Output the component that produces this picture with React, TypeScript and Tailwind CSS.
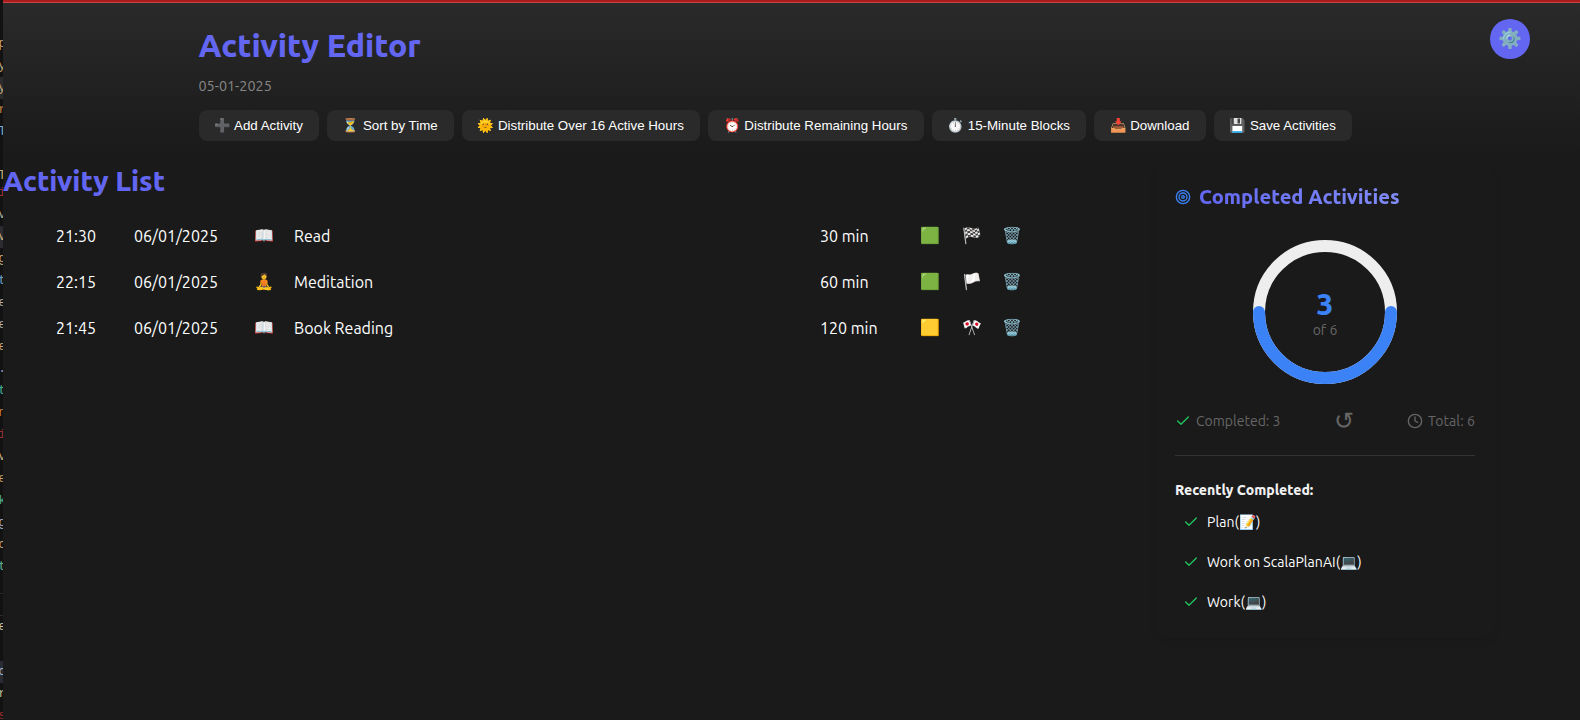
import React from "react";

const actions = [
  { icon: "➕", label: "Add Activity", w: "w-[120px]" },
  { icon: "⏳", label: "Sort by Time", w: "w-[127px]" },
  { icon: "🌞", label: "Distribute Over 16 Active Hours", w: "w-[238px]" },
  { icon: "⏰", label: "Distribute Remaining Hours", w: "w-[216px]" },
  { icon: "⏱️", label: "15-Minute Blocks", w: "w-[154px]" },
  { icon: "📥", label: "Download", w: "w-[112px]" },
  { icon: "💾", label: "Save Activities", w: "w-[138px]" },
];

const activities = [
  { time: "21:30", date: "06/01/2025", icon: "📖", name: "Read", duration: "30 min", level: "🟩", flag: "🏁" },
  { time: "22:15", date: "06/01/2025", icon: "🧘", name: "Meditation", duration: "60 min", level: "🟩", flag: "🏳️" },
  { time: "21:45", date: "06/01/2025", icon: "📖", name: "Book Reading", duration: "120 min", level: "🟨", flag: "🎌" },
];

const completed = ["Plan(📝)", "Work on ScalaPlanAI(💻)", "Work(💻)"];

// Slice of the editor window that shows behind the app's left edge.
const edge = [
  ["", "h-[22px]"], ["p", "h-[22px] text-[#c8a878]"], ["y", "h-[22px] text-[#c8a878]"], ["y", "h-[22px] text-[#c8a878] bg-[#2a2c30]"],
  ["r", "h-[22px] text-[#c08040]"], ["l", "h-[22px] text-[#7ab0d8]"], ["", "h-[22px]"], ["T", "h-[17px] text-[#c8a878]"],
  ["i", "h-[22px] text-[#a03030]"], ["v", "h-[22px] text-[#b0a890]"], ["v", "h-[22px] text-[#c8a878] bg-[#2a2c30]"], ["g", "h-[22px] text-[#c8a878]"],
  ["t", "h-[22px] text-[#6aa0c0]"], ["e", "h-[22px] text-[#b0b0a8]"], ["e", "h-[22px] text-[#b0b0a8]"], ["e", "h-[22px] text-[#c8a878]"],
  [".", "h-[22px] text-[#a0a0c0]"], ["t", "h-[22px] text-[#40b090]"], ["n", "h-[22px] text-[#d08840]"], ["i", "h-[22px] text-[#a03030]"],
  ["v", "h-[22px] text-[#c8a878]"], ["e", "h-[22px] text-[#c8a060]"], ["k", "h-[22px] text-[#50b090]"], ["g", "h-[22px] text-[#b0b0c0]"],
  ["c", "h-[22px] text-[#c8a878]"], ["t", "h-[22px] text-[#60b090]"], ["", "h-[16px] border-b border-[#2a2a2a]"], ["", "h-[22px] border-b border-[#2a2a2a]"],
  ["e", "h-[23px] text-[#c8c8b0]"], ["", "h-[22px]"], ["c", "h-[22px] text-[#a0b8d0] bg-[#2a2c34]"], ["r", "h-[22px] text-[#b8b890]"], ["s", "h-[22px] text-[#a03030]"],
];

function Check({ className }: { className: string }) {
  return (
    <svg viewBox="0 0 24 24" className={className} fill="none" stroke="#22c55e" strokeWidth="2" strokeLinecap="round" strokeLinejoin="round">
      <path d="M20 6 9 17l-5-5" />
    </svg>
  );
}

function Header() {
  return (
    <header className="relative flex h-[152px] flex-col bg-linear-to-b from-[#2a2a2a] to-[#1a1a1a] pl-[195.5px]">
      <h1 className="mt-[21px] h-[42px] text-[32px] leading-[42px] font-extrabold text-[#6366f1]">Activity Editor</h1>
      <p className="mt-[9px] h-[22px] text-[14.4px] leading-[22px] font-[430] text-[#888888]">05-01-2025</p>
      <div className="mt-[13px] flex gap-2 font-['Liberation_Sans',Arial,sans-serif] text-[13.333px] leading-[15px]">
        {actions.map((a) => (
          <button key={a.label} className={`${a.w} h-[31px] shrink-0 overflow-hidden rounded-lg bg-[#2a2a2a] text-center whitespace-nowrap text-white`}>
            {a.icon} {a.label}
          </button>
        ))}
      </div>
      <button className="absolute top-4 right-[50px] flex size-10 items-center justify-center rounded-full bg-[#6366f1] text-[19.2px] leading-none">
        ⚙️
      </button>
    </header>
  );
}

function ActivityList() {
  return (
    <section className="w-[1152px] pt-[7px]">
      <h2 className="h-[38px] text-[28px] leading-[38px] font-extrabold text-[#6366f1]">Activity List</h2>
      <ul className="mt-[13px]">
        {activities.map((a) => (
          <li key={a.time} className="flex h-[46px] items-center pl-[53px] text-base font-[430] text-white">
            <span className="w-[78px]">{a.time}</span>
            <span className="w-[120px]">{a.date}</span>
            <span className="w-[40px] pb-[2px]">{a.icon}</span>
            <span className="w-[526px]">{a.name}</span>
            <span className="w-[100px]">{a.duration}</span>
            <span className="w-[42px] pb-[2px]">{a.level}</span>
            <span className="w-[40px] pb-[2px]">{a.flag}</span>
            <span className="pb-[2px]">🗑️</span>
          </li>
        ))}
      </ul>
    </section>
  );
}

function CompletedCard() {
  return (
    <aside className="mt-2 h-[475px] w-[340px] rounded-xl bg-[#1a1a1a] px-5 pt-[20px] shadow-[0_4px_6px_rgba(0,0,0,0.05)]">
      <div className="flex h-[28px] items-center gap-2">
        <svg viewBox="0 0 24 24" className="size-4" fill="none" stroke="#3b82f6" strokeWidth="2">
          <circle cx="12" cy="12" r="10" />
          <circle cx="12" cy="12" r="6" />
          <circle cx="12" cy="12" r="2" />
        </svg>
        <h3 className="bg-linear-to-r from-[#6366f1] to-[#818cf8] bg-clip-text text-[20px] leading-[28px] font-extrabold whitespace-nowrap text-transparent">Completed Activities</h3>
      </div>
      <div className="mt-[26px] flex justify-center">
        <div className="grid size-[150px] place-items-center">
          <svg viewBox="0 0 150 150" className="col-start-1 row-start-1 size-[150px]" fill="none" strokeWidth="12">
            <circle cx="75" cy="75" r="66" stroke="#eeeeee" />
            <path d="M9 75a66 66 0 0 0 132 0" stroke="#3b82f6" strokeLinecap="round" />
          </svg>
          <div className="col-start-1 row-start-1 flex flex-col items-center pt-[3px]">
            <span className="text-[30px] leading-[33px] font-extrabold text-[#3b82f6]">3</span>
            <span className="text-[14px] leading-[19px] text-[#666666]">of 6</span>
          </div>
        </div>
      </div>
      <div className="mt-[22px] flex h-[24px] items-center justify-between text-[14px] text-[#666666]">
        <span className="flex items-center gap-[5px]">
          <Check className="size-4" />
          Completed: 3
        </span>
        <span className="text-[24px] leading-none">↺</span>
        <span className="flex items-center gap-[5px]">
          <svg viewBox="0 0 24 24" className="size-4" fill="none" stroke="#666666" strokeWidth="2" strokeLinecap="round" strokeLinejoin="round">
            <circle cx="12" cy="12" r="10" />
            <path d="M12 6v6l4 2" />
          </svg>
          <span className="tracking-[0.1px]">Total: 6</span>
        </span>
      </div>
      <div className="mt-[22px] border-t border-[#333333] pt-[24px]">
        <h4 className="h-[20px] text-[14px] leading-[20px] font-extrabold text-[#f0f0f0]">Recently Completed:</h4>
        <ul className="mt-[2px]">
          {completed.map((c) => (
            <li key={c} className="flex h-10 items-center gap-2 pl-2 text-[14px] font-[430] text-white">
              <Check className="size-4" />
              <span className="pt-px tracking-[0.05px]">{c}</span>
            </li>
          ))}
        </ul>
      </div>
    </aside>
  );
}

export default function App() {
  return (
    <div className="flex h-[720px] w-[1580px] overflow-hidden bg-[#1a1a1a] font-[Ubuntu,'Noto_Sans',sans-serif]">
      <div className="w-[3px] shrink-0 overflow-hidden bg-[#121212] pt-[11px] font-['Liberation_Mono',monospace] text-[13px] leading-[22px]">
        {edge.map(([ch, cls], i) => (
          <div key={i} className={`flex w-[3px] justify-end overflow-hidden ${cls}`}>
            <span className="-mr-[3px]">{ch}</span>
          </div>
        ))}
      </div>
      <main className="min-w-0 grow">
        <div className="h-[3px] border-b border-[#c44848] bg-[#aa1b1b]" />
        <Header />
        <div className="flex">
          <ActivityList />
          <CompletedCard />
        </div>
      </main>
    </div>
  );
}
